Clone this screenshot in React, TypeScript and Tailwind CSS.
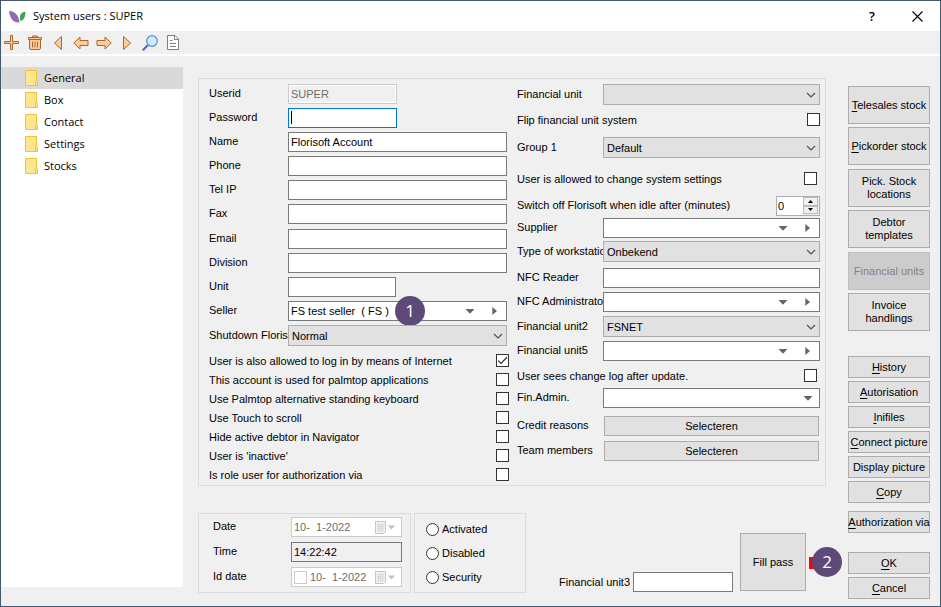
import React, { useId } from "react";
import type { ReactNode } from "react";

const labelCls = "shrink-0 overflow-hidden whitespace-nowrap pb-0.5";
const boxCls =
  "block h-5 w-full border border-[#7a7a7a] bg-white px-0.5 text-black outline-none";
const buttonCls =
  "flex items-center justify-center border border-[#adadad] bg-[#e1e1e1] text-center leading-[13px] whitespace-nowrap";

type RowProps = {
  label: string;
  labelWidth?: string;
  className?: string;
  children: (id: string) => ReactNode;
};

function Row({ label, labelWidth = "w-[79px]", className = "", children }: RowProps) {
  const id = useId();
  return (
    <div className={`flex items-center ${className}`}>
      <label htmlFor={id} className={`${labelCls} ${labelWidth}`}>
        {label}
      </label>
      {children(id)}
    </div>
  );
}

function TextRow({ label, value = "", width = "flex-1", ...rest }: Omit<RowProps, "children"> & { value?: string; width?: string }) {
  return (
    <Row label={label} {...rest}>
      {(id) => (
        <div className={`min-w-0 ${width}`}>
          <input id={id} type="text" defaultValue={value} className={boxCls} />
        </div>
      )}
    </Row>
  );
}

function SelectRow({ label, value, ...rest }: Omit<RowProps, "children"> & { value: string }) {
  return (
    <Row label={label} {...rest}>
      {(id) => (
        <div className="relative min-w-0 flex-1">
          <select
            id={id}
            defaultValue={value}
            className="block h-[21px] w-full appearance-none border border-[#adadad] bg-[#e1e1e1] pl-[3px] text-black outline-none"
          >
            <option>{value}</option>
          </select>
          <svg className="pointer-events-none absolute top-2 right-1" width="10" height="6" viewBox="0 0 10 6">
            <path d="M1 1 5 5 9 1" fill="none" stroke="#505050" strokeWidth="1.2" />
          </svg>
        </div>
      )}
    </Row>
  );
}

function LookupRow({ label, value = "", single = false, badge, ...rest }: Omit<RowProps, "children"> & { value?: string; single?: boolean; badge?: ReactNode }) {
  return (
    <Row label={label} {...rest}>
      {(id) => (
        <div className="relative min-w-0 flex-1">
          <input id={id} type="text" defaultValue={value} className={boxCls} />
          <div className="absolute inset-y-0 right-0 flex items-center">
            <button type="button" aria-label={`Open ${label}`} className="flex w-6 justify-center">
              <svg width="10" height="5" viewBox="0 0 10 5">
                <path d="M0.5 0h9L5 4.8z" fill="#666" />
              </svg>
            </button>
            {!single && (
              <button type="button" aria-label={`Go to ${label}`} className="flex w-[25px] justify-center">
                <svg width="5" height="8" viewBox="0 0 5 8">
                  <path d="M0.3 0v8L5 4z" fill="#666" />
                </svg>
              </button>
            )}
          </div>
          {badge}
        </div>
      )}
    </Row>
  );
}

function CheckRow({ label, checked = false, className = "" }: { label: string; checked?: boolean; className?: string }) {
  const id = useId();
  return (
    <div className={`flex h-[13px] items-center justify-between ${className}`}>
      <label htmlFor={id} className="whitespace-nowrap">
        {label}
      </label>
      <span className="relative block size-[13px] shrink-0">
        <input
          id={id}
          type="checkbox"
          defaultChecked={checked}
          className="peer block size-[13px] appearance-none border border-[#333] bg-white"
        />
        <svg className="pointer-events-none absolute inset-0 hidden peer-checked:block" width="13" height="13" viewBox="0 0 13 13">
          <path d="M2.2 6.6 5 9.4 11 3.2" fill="none" stroke="#333" strokeWidth="1.3" />
        </svg>
      </span>
    </div>
  );
}

function Badge({ children, className }: { children: ReactNode; className: string }) {
  return (
    <span
      className={`absolute flex size-[30px] items-center justify-center rounded-full bg-[#5f497a] font-[Open_Sans,sans-serif] text-[17px] font-medium text-white ${className}`}
    >
      {children}
    </span>
  );
}

/* Caption whose first letter is the keyboard accelerator. */
function Accel({ children }: { children: string }) {
  return (
    <span>
      <span className="underline underline-offset-2">{children[0]}</span>
      {children.slice(1)}
    </span>
  );
}

const toolbar: { name: string; icon: ReactNode }[] = [
  { name: "Add", icon: <path d="M6.500 0.500h2v6h6v2h-6v6h-2v-6h-6v-2h6z" /> },
  {
    name: "Delete",
    icon: (
      <>
        <path d="M2.500 4.500h11v8.500q0 1.500-1.500 1.500h-8Q2.500 14.500 2.500 13z" />
        <path d="M1.500 2.500h13v2h-13zM5.500 2.500v-1.500h5v1.500" />
        <path d="M5.500 6.500v6M8 6.500v6M10.500 6.500v6" />
      </>
    ),
  },
  { name: "First", icon: <path d="M11.500 1.500v13L4.500 8z" /> },
  { name: "Previous", icon: <path d="M0.800 8 7 2v3.500h8v5H7V14z" /> },
  { name: "Next", icon: <path d="M15.200 8 9 2v3.500H1v5h8V14z" /> },
  { name: "Last", icon: <path d="M4.500 1.500v13l7-6.500z" /> },
  {
    name: "Search",
    icon: (
      <>
        <path d="M0.800 15.200 6 10" stroke="#4472c4" strokeWidth="2.200" />
        <circle cx="10" cy="6" r="5.300" fill="#cfeaff" stroke="#5b8fce" strokeWidth="1.200" />
      </>
    ),
  },
  {
    name: "Document",
    icon: (
      <>
        <path d="M2.500 0.500h7.500l3.500 3.500v10.500h-11z" fill="#fff" stroke="#7f7f7f" />
        <path d="M9.500 0.500v4h4M5 5.500h2.500M5 8.500h6M5 11.500h6" fill="none" stroke="#7f7f7f" />
      </>
    ),
  },
];

function FolderIcon() {
  return (
    <svg width="13" height="16" viewBox="0 0 13 16">
      <path d="M0.500 0.500h11v15h-11z" fill="#ffe58f" stroke="#ecc530" />
      <path d="M10.500 15.500v-4q0-1 1-1t1 1v4z" fill="#ffe58f" stroke="#ecc530" />
    </svg>
  );
}

function DateBox({ id, value, checkbox = false }: { id: string; value: string; checkbox?: boolean }) {
  return (
    <div className="flex h-5 w-[111px] items-center border border-[#ccc] bg-white pr-1.5 pl-0.5 text-[#6d6d6d]">
      {checkbox && (
        <input
          type="checkbox"
          disabled
          aria-label="Use id date"
          className="mr-[3px] size-[13px] shrink-0 appearance-none border border-[#ccc] bg-white"
        />
      )}
      <input id={id} type="text" disabled defaultValue={value} className="w-0 min-w-0 flex-1 bg-transparent" />
      <svg width="21" height="13" viewBox="0 0 21 13" className="shrink-0">
        <path d="M1.500 0.500h10v10l-2 2h-8z" fill="#f0f1f4" stroke="#c9c5c5" />
        <path d="M3 3.500h7M3 5.500h7M3 7.500h7M3 9.500h7M4.500 3v7.500M6.500 3v7.500M8.500 3v7.500" stroke="#cfd3da" strokeWidth="0.700" />
        <path d="M14 4.500h7L17.500 8.500z" fill="#bfbfbf" />
      </svg>
    </div>
  );
}

export default function App() {
  return (
    <div className="flex min-h-screen flex-col border border-[#44586e] bg-[#f0f0f0] font-[Liberation_Sans,Arial,sans-serif] text-[11px] leading-[14px] text-black">
      <header className="flex h-[30px] items-center bg-white pr-[17px] pl-2 font-[Open_Sans,sans-serif]">
        <svg width="17" height="13" viewBox="0 0 17 13">
          <path d="M0 1Q3 0.500 6 3q4 3 4.500 9.500Q5 12.500 2.500 9 0.500 5.500 0 1z" fill="#8f6bb0" />
          <path d="M16.500 1.500q-3.500 0.500-5 3-1.300 2.500-0.300 6.500 3.300-0.500 4.300-3.500Q16.500 5 16.500 1.500z" fill="#3fa056" />
        </svg>
        <h1 className="ml-[7px] flex-1">System users : SUPER</h1>
        <button type="button" className="w-4 text-[13px] font-semibold">
          ?
        </button>
        <button type="button" aria-label="Close" className="ml-8">
          <svg width="11" height="11" viewBox="0 0 11 11">
            <path d="M0.500 0.500l10 10M10.500 0.500l-10 10" stroke="#000" strokeWidth="1.100" />
          </svg>
        </button>
      </header>

      <div role="toolbar" className="flex h-[25px] border-b-2 border-white">
        {toolbar.map(({ name, icon }) => (
          <button key={name} type="button" aria-label={name} className="flex w-[23px] items-center pl-[3px]">
            <svg width="16" height="16" viewBox="0 0 16 16" fill="#ffcc99" stroke="#a5682f" strokeWidth="1">
              {icon}
            </svg>
          </button>
        ))}
      </div>

      <div className="flex flex-1">
        <nav className="mt-[11px] mb-[19px] w-[182px] shrink-0 bg-white font-[Open_Sans,sans-serif]">
          {["General", "Box", "Contact", "Settings", "Stocks"].map((name, i) => (
            <a
              key={name}
              href={`#${name.toLowerCase()}`}
              className={`flex h-[22px] items-center gap-1.5 pl-6 ${i === 0 ? "bg-[#d9d9d9]" : ""}`}
            >
              <FolderIcon />
              {name}
            </a>
          ))}
        </nav>

        <main className="flex min-w-0 flex-1 flex-col pt-[22px] pl-[15px]">
          <section className="grid grid-cols-[300fr_303fr] gap-2 border border-[#dcdcdc] pt-[5px] pr-[5px] pb-1 pl-2.5">
            <div className="min-w-0">
              <div className="flex flex-col gap-1 pr-0.5">
                <Row label="Userid">
                  {(id) => (
                    <input
                      id={id}
                      type="text"
                      disabled
                      defaultValue="SUPER"
                      className="h-5 w-[109px] border border-[#ccc] bg-[#f0f0f0] px-0.5 text-[#6d6d6d] inset-ring inset-ring-white"
                    />
                  )}
                </Row>
                <Row label="Password">
                  {(id) => (
                    <div className="relative">
                      <input id={id} type="password" className="block h-5 w-[109px] border border-[#0078d7] bg-white px-0.5 outline-none" />
                      <span className="pointer-events-none absolute top-[3px] left-[3px] h-[13px] w-px bg-black" />
                    </div>
                  )}
                </Row>
                <TextRow label="Name" value="Florisoft Account" />
                <TextRow label="Phone" />
                <TextRow label="Tel IP" />
                <TextRow label="Fax" />
              </div>
              <div className="mt-[5px] flex flex-col gap-1 pr-0.5">
                <TextRow label="Email" />
                <TextRow label="Division" />
                <TextRow label="Unit" width="w-[108px]" />
                <LookupRow
                  label="Seller"
                  value="FS test seller  ( FS )"
                  badge={<Badge className="-top-[5px] left-[107px]">1</Badge>}
                />
                <SelectRow label="Shutdown Florisoft" value="Normal" />
              </div>
              <div className="mt-2 flex flex-col gap-1.5">
                <CheckRow label="User is also allowed to log in by means of Internet" checked />
                <CheckRow label="This account is used for palmtop applications" />
                <CheckRow label="Use Palmtop alternative standing keyboard" />
                <CheckRow label="Use Touch to scroll" />
                <CheckRow label="Hide active debtor in Navigator" />
                <CheckRow label="User is 'inactive'" />
                <CheckRow label="Is role user for authorization via" />
              </div>
            </div>

            <div className="min-w-0">
              <SelectRow label="Financial unit" value="" labelWidth="w-[86px]" />
              <CheckRow label="Flip financial unit system" className="mt-2" />
              <SelectRow label="Group 1" value="Default" labelWidth="w-[86px]" className="mt-[11px]" />
              <CheckRow label="User is allowed to change system settings" className="mt-3.5 pr-[3px]" />
              <Row label="Switch off Florisoft when idle after (minutes)" labelWidth="flex-1" className="mt-[11px]">
                {(id) => (
                  <div className="flex h-5 w-11 border border-[#adadad] bg-white">
                    <input id={id} type="text" defaultValue="0" className="w-0 min-w-0 flex-1 pl-px outline-none" />
                    <div className="flex w-4 flex-col bg-[#f0f0f0] pr-px pb-px">
                      <button type="button" aria-label="More" className="flex flex-1 items-center justify-center border border-[#bbb]">
                        <svg width="5" height="3" viewBox="0 0 5 3">
                          <path d="M0 3h5L2.500 0z" />
                        </svg>
                      </button>
                      <button type="button" aria-label="Less" className="flex flex-1 items-center justify-center border border-[#bbb]">
                        <svg width="5" height="3" viewBox="0 0 5 3">
                          <path d="M0 0h5L2.500 3z" />
                        </svg>
                      </button>
                    </div>
                  </div>
                )}
              </Row>
              <LookupRow label="Supplier" labelWidth="w-[86px]" className="mt-0.5" />
              <SelectRow label="Type of workstation" value="Onbekend" labelWidth="w-[86px]" className="mt-[3px]" />
              <TextRow label="NFC Reader" labelWidth="w-[86px]" className="mt-1.5" />
              <LookupRow label="NFC Administrator" labelWidth="w-[86px]" className="mt-1" />
              <SelectRow label="Financial unit2" value="FSNET" labelWidth="w-[86px]" className="mt-1" />
              <LookupRow label="Financial unit5" labelWidth="w-[86px]" className="mt-1" />
              <CheckRow label="User sees change log after update." className="mt-2 pr-[3px]" />
              <LookupRow label="Fin.Admin." labelWidth="w-[86px]" className="mt-1.5" single />
              <Row label="Credit reasons" labelWidth="w-[87px]" className="mt-2 pr-px">
                {(id) => (
                  <button id={id} type="button" className={`${buttonCls} h-5 flex-1`}>
                    Selecteren
                  </button>
                )}
              </Row>
              <Row label="Team members" labelWidth="w-[87px]" className="mt-[5px] pr-px">
                {(id) => (
                  <button id={id} type="button" className={`${buttonCls} h-5 flex-1`}>
                    Selecteren
                  </button>
                )}
              </Row>
            </div>
          </section>

          <section className="mt-[27px] flex h-20 gap-[3px]">
            <div className="flex w-[213px] shrink-0 flex-col gap-[5px] border border-[#dcdcdc] pt-[3px] pl-3.5">
              <Row label="Date" labelWidth="w-[78px]">
                {(id) => <DateBox id={id} value="10-  1-2022" />}
              </Row>
              <Row label="Time" labelWidth="w-[78px]">
                {(id) => (
                  <input
                    id={id}
                    type="text"
                    readOnly
                    defaultValue="14:22:42"
                    className="h-5 w-[111px] border border-[#7a7a7a] bg-[#f0f0f0] px-0.5 outline-none"
                  />
                )}
              </Row>
              <Row label="Id date" labelWidth="w-[78px]">
                {(id) => <DateBox id={id} value="10-  1-2022" checkbox />}
              </Row>
            </div>
            <div role="radiogroup" aria-label="Status" className="flex w-28 shrink-0 flex-col gap-2.5 border border-[#dcdcdc] pt-2 pl-[11px]">
              {["Activated", "Disabled", "Security"].map((name) => (
                <label key={name} className="flex h-3.5 items-center gap-[3px]">
                  <input type="radio" name="status" className="size-[13px] appearance-none rounded-full border border-[#333] bg-white checked:border-4" />
                  {name}
                </label>
              ))}
            </div>
            <div className="flex flex-1 items-end justify-end pr-5">
              <label htmlFor="unit3" className="mb-1 whitespace-nowrap">
                Financial unit3
              </label>
              <input id="unit3" type="text" className="mb-px ml-[3px] h-5 w-[100px] border border-[#7a7a7a] bg-white px-0.5 outline-none" />
              <div className="relative mb-0.5 ml-[7px]">
                <button type="button" className={`${buttonCls} h-[58px] w-[66px]`}>
                  Fill pass
                </button>
                <span className="absolute top-6 left-[69px] h-3 w-3 bg-[#f00]" />
                <Badge className="top-3.5 left-[72px]">2</Badge>
              </div>
            </div>
          </section>
        </main>

        <aside className="flex shrink-0 flex-col pt-[30px] pr-2.5 pl-[22px]">
          <div className="flex w-[82px] flex-col gap-1">
            <div className="grid auto-rows-[38px] gap-[3px]">
              <button type="button" className={buttonCls}>
                <Accel>Telesales stock</Accel>
              </button>
              <button type="button" className={buttonCls}>
                <Accel>Pickorder stock</Accel>
              </button>
            </div>
            <div className="grid auto-rows-[38px] gap-[3px]">
              <button type="button" className={buttonCls}>
                Pick. Stock
                <br />
                locations
              </button>
              <button type="button" className={buttonCls}>
                Debtor
                <br />
                templates
              </button>
            </div>
            <div className="grid auto-rows-[38px] gap-[3px]">
              <button type="button" disabled className="border border-[#bfbfbf] bg-[#ccc] whitespace-nowrap text-[#838383]">
                Financial units
              </button>
              <button type="button" className={buttonCls}>
                Invoice
                <br />
                handlings
              </button>
            </div>
          </div>
          <div className="mt-[25px] grid w-[82px] auto-rows-[22px] gap-[3px]">
            {["History", "Autorisation", "Inifiles", "Connect picture"].map((name) => (
              <button key={name} type="button" className={buttonCls}>
                <Accel>{name}</Accel>
              </button>
            ))}
            <button type="button" className={buttonCls}>
              Display picture
            </button>
            <button type="button" className={buttonCls}>
              <Accel>Copy</Accel>
            </button>
          </div>
          <button type="button" className={`${buttonCls} mt-2 h-[22px] w-[82px]`}>
            <Accel>Authorization via</Accel>
          </button>
          <div className="mt-[19px] grid w-[82px] auto-rows-[22px] gap-[3px]">
            <button type="button" className={buttonCls}>
              <Accel>OK</Accel>
            </button>
            <button type="button" className={buttonCls}>
              <Accel>Cancel</Accel>
            </button>
          </div>
        </aside>
      </div>
    </div>
  );
}
